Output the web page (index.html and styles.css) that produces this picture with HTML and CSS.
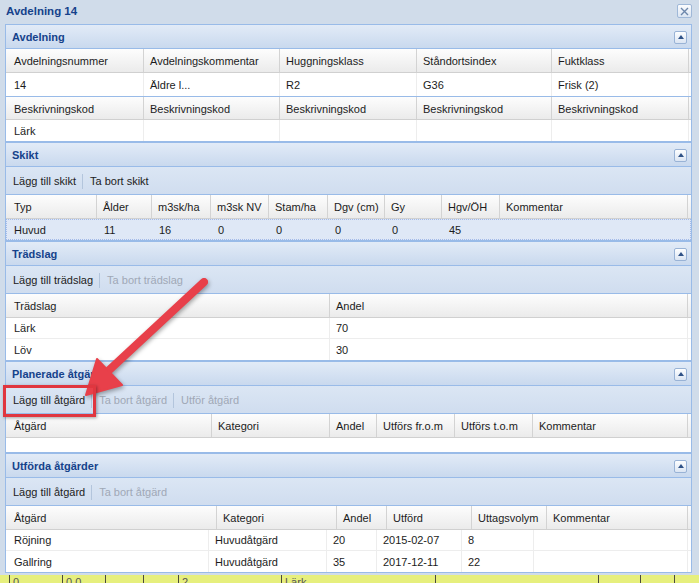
FILE: index.html
```html
<!DOCTYPE html>
<html lang="sv">
<head>
<meta charset="utf-8">
<title>Avdelning 14</title>
<link rel="stylesheet" href="styles.css">
</head>
<body>
<div class="window">
  <div class="win-title">
    <span>Avdelning 14</span>
    <span class="close"><svg width="9" height="9" viewBox="0 0 9 9"><path d="M1 1L8 8M8 1L1 8" stroke="#6d87ab" stroke-width="1.4" fill="none"/></svg></span>
  </div>
  <div class="win-body">
    <div class="container">
      <section class="panel">
        <div class="panel-head"><span>Avdelning</span><span class="tool"><i></i></span></div>
        <div class="grid g-avd gh h24"><div>Avdelningsnummer</div><div>Avdelningskommentar</div><div>Huggningsklass</div><div>Ståndortsindex</div><div>Fuktklass</div><div></div></div>
        <div class="grid g-avd gr h23 last"><div>14</div><div>Äldre l...</div><div>R2</div><div>G36</div><div>Frisk (2)</div><div></div></div>
        <div class="gsep"></div>
        <div class="grid g-avd gh h23"><div>Beskrivningskod</div><div>Beskrivningskod</div><div>Beskrivningskod</div><div>Beskrivningskod</div><div>Beskrivningskod</div><div></div></div>
        <div class="grid g-avd gr last"><div>Lärk</div><div></div><div></div><div></div><div></div><div></div></div>
      </section>

      <section class="panel">
        <div class="panel-head"><span>Skikt</span><span class="tool"><i></i></span></div>
        <div class="toolbar"><span class="btn">Lägg till skikt</span><span class="tsep"></span><span class="btn">Ta bort skikt</span></div>
        <div class="grid g-skikt gh h24"><div>Typ</div><div>Ålder</div><div>m3sk/ha</div><div>m3sk NV</div><div>Stam/ha</div><div>Dgv (cm)</div><div>Gy</div><div>Hgv/ÖH</div><div>Kommentar</div><div></div></div>
        <div class="grid g-skikt gr sel"><div>Huvud</div><div>11</div><div>16</div><div>0</div><div>0</div><div>0</div><div>0</div><div>45</div><div></div><div></div></div>
      </section>

      <section class="panel">
        <div class="panel-head"><span>Trädslag</span><span class="tool"><i></i></span></div>
        <div class="toolbar"><span class="btn">Lägg till trädslag</span><span class="tsep"></span><span class="btn disabled">Ta bort trädslag</span></div>
        <div class="grid g-trad gh h24"><div>Trädslag</div><div>Andel</div><div></div></div>
        <div class="grid g-trad gr"><div>Lärk</div><div>70</div><div></div></div>
        <div class="grid g-trad gr last"><div>Löv</div><div>30</div><div></div></div>
      </section>

      <section class="panel">
        <div class="panel-head"><span>Planerade åtgärder</span><span class="tool"><i></i></span></div>
        <div class="toolbar"><span class="btn">Lägg till åtgärd</span><span class="tsep"></span><span class="btn disabled">Ta bort åtgärd</span><span class="tsep"></span><span class="btn disabled">Utför åtgärd</span></div>
        <div class="grid g-plan gh h24"><div>Åtgärd</div><div>Kategori</div><div>Andel</div><div>Utförs fr.o.m</div><div>Utförs t.o.m</div><div>Kommentar</div><div></div></div>
        <div class="empty"></div>
      </section>

      <section class="panel">
        <div class="panel-head"><span>Utförda åtgärder</span><span class="tool"><i></i></span></div>
        <div class="toolbar"><span class="btn">Lägg till åtgärd</span><span class="tsep"></span><span class="btn disabled">Ta bort åtgärd</span></div>
        <div class="grid g-utf-h gh h24"><div>Åtgärd</div><div>Kategori</div><div>Andel</div><div>Utförd</div><div>Uttagsvolym</div><div>Kommentar</div><div></div></div>
        <div class="grid g-utf gr"><div>Röjning</div><div>Huvudåtgärd</div><div>20</div><div>2015-02-07</div><div>8</div><div></div><div></div></div>
        <div class="grid g-utf gr last"><div>Gallring</div><div>Huvudåtgärd</div><div>35</div><div>2017-12-11</div><div>22</div><div></div><div></div></div>
      </section>
    </div>
  </div>
</div>

<div class="strip">
  <span class="sc w9"></span>
  <span class="sc w53">0</span>
  <span class="sc w43">0,0</span>
  <span class="sc w38"></span>
  <span class="sc w35"></span>
  <span class="sc w103">2</span>
  <span class="sc w154">Lärk</span>
  <span class="sc w163"></span>
  <span class="sc w42"></span>
  <span class="sc w34"></span>
  <span class="sc w25"></span>
</div>

<svg class="arrow" width="699" height="583" viewBox="0 0 699 583">
  <line x1="204" y1="282" x2="106" y2="373" stroke="#e8404a" stroke-width="8" stroke-linecap="round"/>
  <polygon points="86,395 97,359 122,385" fill="#e8404a" stroke="#e8404a" stroke-width="2" stroke-linejoin="round"/>
</svg>
<div class="highlight"></div>
</body>
</html>
```

FILE: styles.css
```css
* { box-sizing: border-box; }

html, body { margin: 0; padding: 0; }

body {
  width: 699px;
  height: 583px;
  overflow: hidden;
  position: relative;
  font-family: "Liberation Sans", Arial, sans-serif;
  font-size: 11px;
  color: #1c1c1c;
  background: #e6ef7d;
}

.window {
  height: 575px;
  background: #d0dcea;
  display: flex;
  flex-direction: column;
}

.win-title {
  height: 24px;
  display: flex;
  align-items: center;
  justify-content: space-between;
  padding: 0 7px 2px 6px;
  font-weight: bold;
  font-size: 11.5px;
  color: #15428b;
}

.close {
  width: 15px;
  height: 14px;
  border: 1px solid #9fb8d8;
  border-radius: 2px;
  background: linear-gradient(#fbfcfe, #dbe5f2);
  display: flex;
  align-items: center;
  justify-content: center;
}

.win-body { padding: 0 7px 0 5px; }

.container {
  border: 1px solid #99bbe8;
  background: #fff;
}

.panel + .panel { border-top: 2px solid #99bbe8; }

.panel-head {
  height: 24px;
  border-bottom: 1px solid #99bbe8;
  background: linear-gradient(#e2ebf7, #c9d9ee);
  display: flex;
  align-items: center;
  justify-content: space-between;
  padding: 1px 4px 0 6px;
  font-weight: bold;
  color: #15428b;
}

.tool {
  width: 13px;
  height: 13px;
  border: 1px solid #99b3d6;
  border-radius: 2px;
  background: linear-gradient(#fdfeff, #dbe5f3);
  display: flex;
  align-items: center;
  justify-content: center;
}

.tool i {
  display: block;
  width: 0;
  height: 0;
  border-left: 3px solid transparent;
  border-right: 3px solid transparent;
  border-bottom: 4px solid #2f5287;
}

.toolbar {
  height: 28px;
  border-bottom: 1px solid #99bbe8;
  background: linear-gradient(#dbe6f4, #d0ddef);
  display: flex;
  align-items: center;
  padding: 1px 0 0 4px;
  color: #222;
}

.btn { padding: 0 3px; white-space: nowrap; }
.btn.disabled { color: #a0a8b6; }

.tsep {
  width: 1px;
  height: 15px;
  background: #b3c5dc;
  margin: 0 4px 0 3px;
}

.grid { display: grid; }

.g-avd { grid-template-columns: 138px 136px 137px 135px 137px 1fr; }
.g-skikt { grid-template-columns: 91px 55px 59px 58px 59px 57px 57px 58px 188px 1fr; }
.g-trad { grid-template-columns: 324px 358px 1fr; }
.g-plan { grid-template-columns: 206px 118px 47px 78px 78px 155px 1fr; }
.g-utf-h { grid-template-columns: 211px 120px 50px 85px 75px 141px 1fr; }
.g-utf { grid-template-columns: 203px 118px 50px 85px 72px 154px 1fr; }

.gh {
  height: 23px;
  background: linear-gradient(#fdfdfd, #ebebeb);
  border-bottom: 1px solid #d0d0d0;
}
.gh.h24 { height: 24px; }

.gh > div {
  border-right: 1px solid #d3d3d3;
  padding: 1px 0 0 6px;
  display: flex;
  align-items: center;
  white-space: nowrap;
  overflow: hidden;
}

.gr {
  height: 21px;
  background: #fff;
  border-bottom: 1px solid #ededed;
}
.gr.h23 { height: 23px; }
.gr.last { border-bottom: none; }

.gr > div {
  border-right: 1px solid #ededed;
  padding-left: 6px;
  display: flex;
  align-items: center;
  white-space: nowrap;
  overflow: hidden;
}

.gh > div:first-child,
.gr > div:first-child { padding-left: 8px; }

.gh > div:last-child,
.gr > div:last-child { border-right: none; }

.gr.sel {
  background: #dfe8f6;
  border: 1px dotted #a3bae9;
}
.gr.sel > div { border-right: none; }
.gr.sel > div:first-child { padding-left: 7px; }

.gsep { height: 1px; background: #99bbe8; }

.empty { height: 14px; background: #fff; }

.strip {
  height: 8px;
  display: flex;
  overflow: hidden;
  font-size: 11px;
  color: #555;
  line-height: 12px;
}

.sc {
  border-left: 1px solid #4a4a3a;
  padding: 1px 0 0 3px;
  flex: none;
  white-space: nowrap;
}
.sc.w9 { width: 9px; border-left: none; }
.sc.w53 { width: 53px; }
.sc.w43 { width: 43px; }
.sc.w38 { width: 38px; }
.sc.w35 { width: 35px; }
.sc.w103 { width: 103px; }
.sc.w154 { width: 154px; }
.sc.w163 { width: 163px; }
.sc.w42 { width: 42px; }
.sc.w34 { width: 34px; }
.sc.w25 { width: 25px; }

.arrow {
  position: absolute;
  left: 0;
  top: 0;
  pointer-events: none;
  filter: drop-shadow(1px 2px 2px rgba(0, 0, 0, 0.35));
}

.highlight {
  position: absolute;
  left: 3px;
  top: 385px;
  width: 93px;
  height: 32px;
  border: 3px solid #e0363f;
  box-shadow: 1px 1px 3px rgba(0, 0, 0, 0.35);
  pointer-events: none;
}
```
